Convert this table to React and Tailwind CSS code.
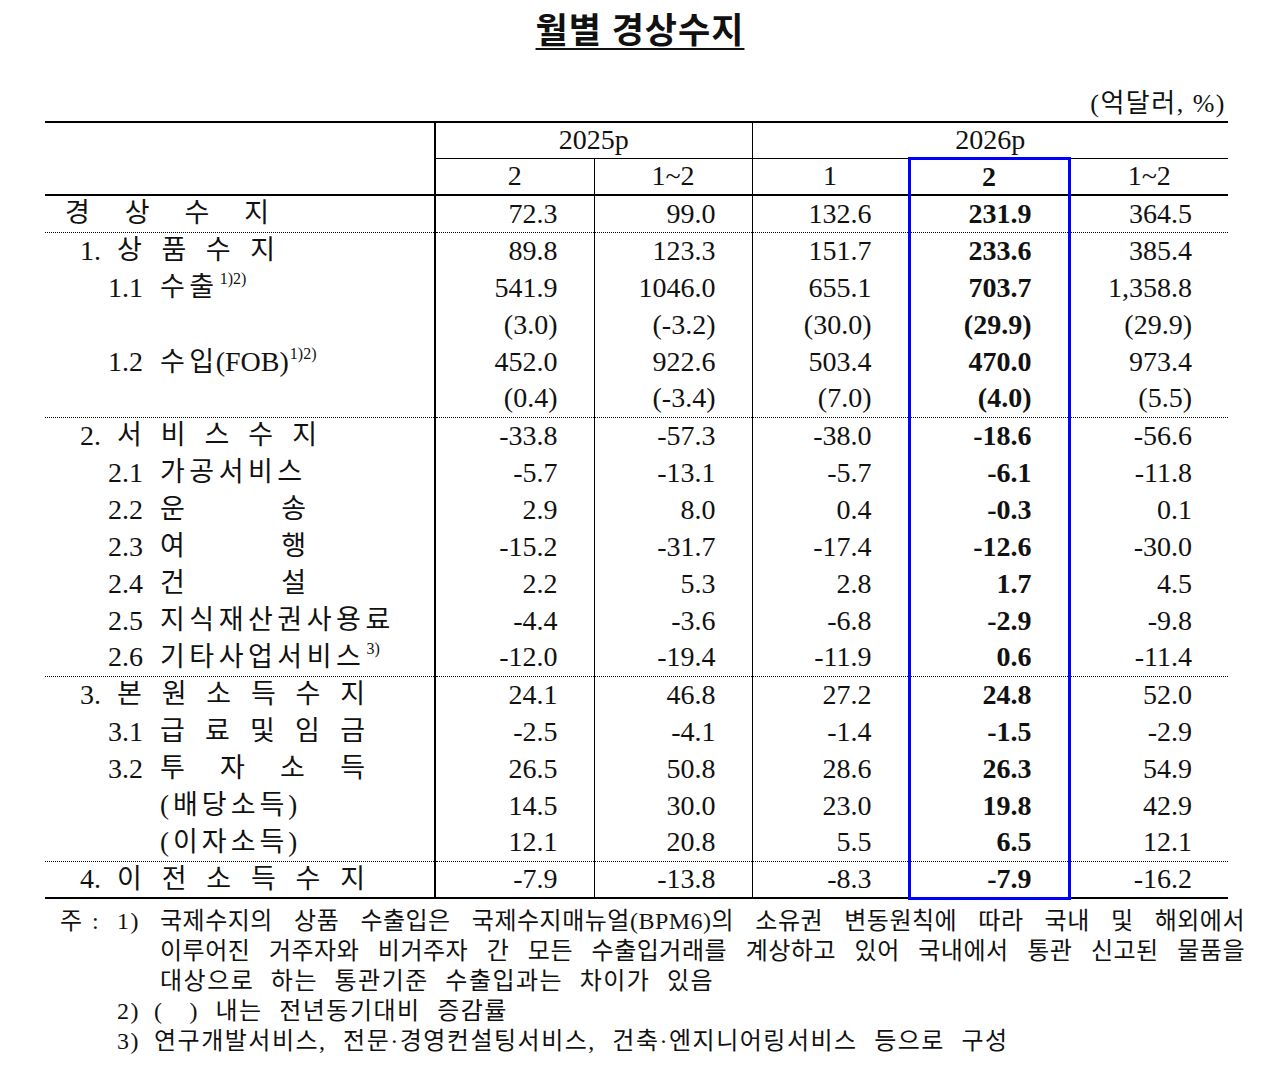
import React from 'react';

// 월별 경상수지 table (억달러, %)
const rows = [
  { k: 'top', t: '경상수지', sp: 'w-[204px]', v: ['72.3', '99.0', '132.6', '231.9', '364.5'], dot: true },
  { k: 'l1', n: '1.', t: '상품수지', sp: 'w-[158px]', v: ['89.8', '123.3', '151.7', '233.6', '385.4'] },
  { k: 'l2', n: '1.1', t: '수출', sup: '1)2)', v: ['541.9', '1046.0', '655.1', '703.7', '1,358.8'] },
  { k: 'none', v: ['(3.0)', '(-3.2)', '(30.0)', '(29.9)', '(29.9)'] },
  { k: 'l2', n: '1.2', t: '수입', en: '(FOB)', sup: '1)2)', v: ['452.0', '922.6', '503.4', '470.0', '973.4'] },
  { k: 'none', v: ['(0.4)', '(-3.4)', '(7.0)', '(4.0)', '(5.5)'], dot: true },
  { k: 'l1', n: '2.', t: '서비스수지', sp: 'w-[200px]', v: ['-33.8', '-57.3', '-38.0', '-18.6', '-56.6'] },
  { k: 'l2', n: '2.1', t: '가공서비스', v: ['-5.7', '-13.1', '-5.7', '-6.1', '-11.8'] },
  { k: 'l2', n: '2.2', t: '운송', sp: 'w-[146px]', v: ['2.9', '8.0', '0.4', '-0.3', '0.1'] },
  { k: 'l2', n: '2.3', t: '여행', sp: 'w-[146px]', v: ['-15.2', '-31.7', '-17.4', '-12.6', '-30.0'] },
  { k: 'l2', n: '2.4', t: '건설', sp: 'w-[146px]', v: ['2.2', '5.3', '2.8', '1.7', '4.5'] },
  { k: 'l2', n: '2.5', t: '지식재산권사용료', v: ['-4.4', '-3.6', '-6.8', '-2.9', '-9.8'] },
  { k: 'l2', n: '2.6', t: '기타사업서비스', sup: '3)', v: ['-12.0', '-19.4', '-11.9', '0.6', '-11.4'], dot: true },
  { k: 'l1', n: '3.', t: '본원소득수지', sp: 'w-[248px]', v: ['24.1', '46.8', '27.2', '24.8', '52.0'] },
  { k: 'l2', n: '3.1', t: '급료및임금', sp: 'w-[205px]', v: ['-2.5', '-4.1', '-1.4', '-1.5', '-2.9'] },
  { k: 'l2', n: '3.2', t: '투자소득', sp: 'w-[205px]', v: ['26.5', '50.8', '28.6', '26.3', '54.9'] },
  { k: 'l3', t: '(배당소득)', v: ['14.5', '30.0', '23.0', '19.8', '42.9'] },
  { k: 'l3', t: '(이자소득)', v: ['12.1', '20.8', '5.5', '6.5', '12.1'], dot: true },
  { k: 'l1', n: '4.', t: '이전소득수지', sp: 'w-[248px]', v: ['-7.9', '-13.8', '-8.3', '-7.9', '-16.2'], last: true },
];

const cellCls = [
  'border-r border-black',
  'border-r border-black',
  '',
  'border-x-[3px] border-[#0000ff] font-bold',
  '',
];

function Spread({ text, w }) {
  return (
    <span className={`inline-flex justify-between ${w}`}>
      {[...text].map((c, i) => (
        <span key={i}>{c}</span>
      ))}
    </span>
  );
}

function Sup({ children }) {
  return <sup className="text-[16px] tracking-normal -top-[12px] ml-[1px]">{children}</sup>;
}

function Label({ r }) {
  if (r.k === 'top') {
    return (
      <div className="flex pl-[20px]">
        <Spread text={r.t} w={r.sp} />
      </div>
    );
  }
  if (r.k === 'l1') {
    return (
      <div className="flex items-center pl-[35px]">
        <span className="w-[37px] text-[28px]">{r.n}</span>
        <Spread text={r.t} w={r.sp} />
      </div>
    );
  }
  if (r.k === 'l2') {
    return (
      <div className="flex items-center pl-[63px]">
        <span className="w-[52px] text-[28px]">{r.n}</span>
        {r.sp ? (
          <Spread text={r.t} w={r.sp} />
        ) : (
          <span className="tracking-[4.5px]">
            {r.t}
            {r.en && <span className="tracking-normal text-[28px] -ml-[3px]">{r.en}</span>}
            {r.sup && <Sup>{r.sup}</Sup>}
          </span>
        )}
      </div>
    );
  }
  if (r.k === 'l3') return <div className="pl-[115px] tracking-[4px]">{r.t}</div>;
  return null;
}

export default function App() {
  return (
    <div className="w-[1280px] h-[1077px] bg-white text-[#111] [font-family:'Liberation_Serif','Noto_Sans_CJK_KR',serif]">
      {/* title */}
      <div className="h-[86px] pt-[12px] text-center">
        <span className="text-[35px] leading-[40px] font-bold tracking-[1px] underline underline-offset-[5px] decoration-[2px]">
          월별 경상수지
        </span>
      </div>

      <div className="ml-[45px] w-[1183px]">
        <div className="h-[35px] leading-[35px] text-right pr-[2px] text-[26px] tracking-[1.5px]">(억달러, %)</div>

        <table className="table-fixed border-collapse w-[1183px] text-[28px] leading-none">
          <colgroup>
            <col className="w-[390px]" />
            <col className="w-[159px]" />
            <col className="w-[158px]" />
            <col className="w-[157px]" />
            <col className="w-[160px]" />
            <col className="w-[159px]" />
          </colgroup>
          <thead>
            <tr className="h-[36px] border-t-2 border-black">
              <td rowSpan={2} className="border-r-2 border-b-2 border-black" />
              <td colSpan={2} className="text-center border-r border-b border-black">2025p</td>
              <td colSpan={3} className="text-center border-b border-black">2026p</td>
            </tr>
            <tr className="h-[37px] border-b-2 border-black">
              <td className="text-center border-r border-black">2</td>
              <td className="text-center border-r border-black">1~2</td>
              <td className="text-center">1</td>
              <td className="text-center font-bold border-x-[3px] border-t-[3px] border-[#0000ff]">2</td>
              <td className="text-center">1~2</td>
            </tr>
          </thead>
          <tbody>
            {rows.map((r, i) => (
              <tr
                key={i}
                className={
                  r.last
                    ? 'h-[37px] border-b-2 border-black'
                    : r.dot
                    ? 'h-[37px] border-b border-dotted border-black'
                    : 'h-[37px]'
                }
              >
                <td className="border-r-2 border-black text-[27px]">
                  <Label r={r} />
                </td>
                {r.v.map((v, j) => (
                  <td
                    key={j}
                    className={`text-right pr-[36px] ${cellCls[j]} ${r.last && j === 3 ? 'border-b-[3px]' : ''}`}
                  >
                    {v}
                  </td>
                ))}
              </tr>
            ))}
          </tbody>
        </table>
      </div>

      {/* notes */}
      <div className="ml-[60px] w-[1185px] mt-[6px] text-[24px] leading-[30px] tracking-[1.5px] [word-spacing:9px]">
        <div className="flex">
          <span className="w-[57px] shrink-0 tracking-normal [word-spacing:4px]">주 :</span>
          <span className="w-[43px] shrink-0">1)</span>
          <div className="flex-1 min-w-0">
            <div className="text-justify [text-align-last:justify] tracking-[0.5px] [word-spacing:3px]">
              국제수지의 상품 수출입은 국제수지매뉴얼(BPM6)의 소유권 변동원칙에 따라 국내 및 해외에서
            </div>
            <div className="text-justify [text-align-last:justify] tracking-[0.5px] [word-spacing:3px]">
              이루어진 거주자와 비거주자 간 모든 수출입거래를 계상하고 있어 국내에서 통관 신고된 물품을
            </div>
            <div>대상으로 하는 통관기준 수출입과는 차이가 있음</div>
          </div>
        </div>
        <div className="flex pl-[57px]">
          <span className="w-[37px] shrink-0">2)</span>
          <span>
            (<span className="inline-block w-[26px]" />) 내는 전년동기대비 증감률
          </span>
        </div>
        <div className="flex pl-[57px]">
          <span className="w-[37px] shrink-0">3)</span>
          <span>연구개발서비스, 전문·경영컨설팅서비스, 건축·엔지니어링서비스 등으로 구성</span>
        </div>
      </div>
    </div>
  );
}
